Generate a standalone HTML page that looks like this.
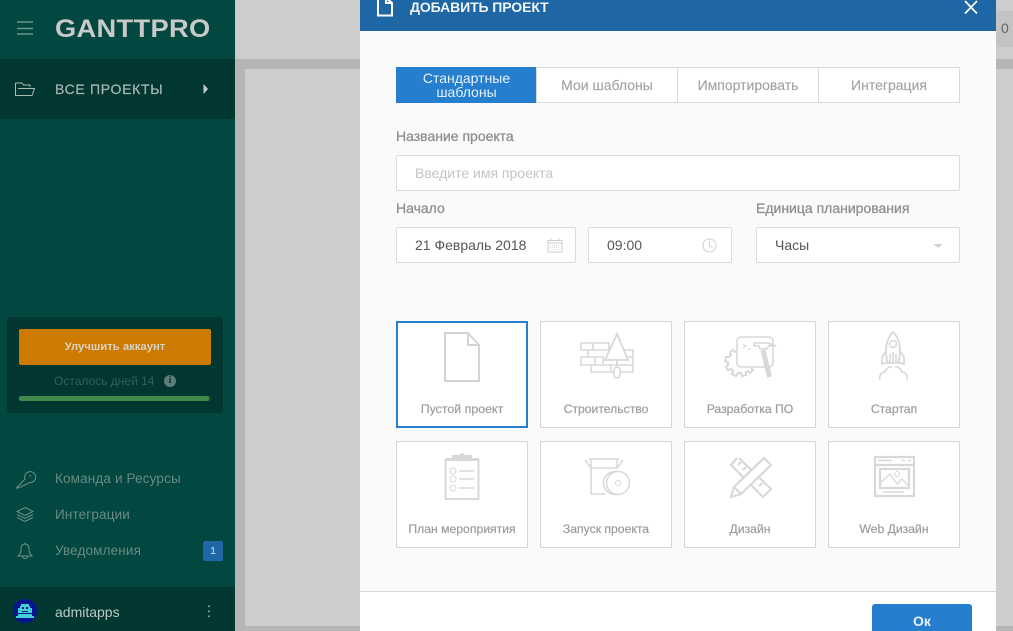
<!DOCTYPE html>
<html><head><meta charset="utf-8">
<style>
html,body{margin:0;padding:0;width:1013px;height:631px;overflow:hidden}
body{background:#cdcdcd;font-family:"Liberation Sans",sans-serif}
#root{position:absolute;left:0;top:0;width:1013px;height:631px;overflow:hidden;background:#cdcdcd}
#root div,#root span{position:absolute;box-sizing:border-box;white-space:nowrap}
svg{position:absolute;overflow:visible}
.t{line-height:16px}
.tab{top:67px;height:36px;background:#fff;border:2px solid #d9d9d9;border-width:1px;color:#a3a3a3;font-size:14px;text-align:center;line-height:34px;-webkit-text-stroke:.15px #a3a3a3}
.lab{color:#8f8f8f;font-size:14px;line-height:16px;-webkit-text-stroke:.3px #8f8f8f}
.inp{background:#fff;border:1px solid #dcdcdc;border-radius:2px;height:36px;font-size:14px;line-height:35px;color:#555}
.card{width:132px;height:107px;background:#fff;border:1px solid #d6d6d6}
.card span{left:0;right:0;top:80px;text-align:center;font-size:12.2px;line-height:14px;color:#9c9c9c;-webkit-text-stroke:.2px #9c9c9c}
.card svg{left:0;top:0;fill:none;stroke:#d8d8d8;stroke-width:2}
.nav{left:55px;font-size:13.5px;line-height:16px;color:#6a8a84;letter-spacing:.15px}
.nsvg{fill:none;stroke:#6f8f89;stroke-width:1}
</style></head><body><div id="root">

<!-- backdrop -->
<div style="left:235px;top:0;width:778px;height:59px;background:#cdcdcd"></div>
<div style="left:235px;top:59px;width:778px;height:10px;background:#b5b5b5"></div>
<div style="left:235px;top:59px;width:10px;height:572px;background:#b5b5b5"></div>
<div style="left:235px;top:626px;width:778px;height:5px;background:#b5b5b5"></div>
<div style="left:996px;top:11px;width:17px;height:36px;background:#c3c3c3"></div>
<div class="t" style="left:1001px;top:20px;font-size:14px;color:#666">0</div>

<!-- sidebar -->
<div style="left:0;top:0;width:235px;height:631px;background:#024740"></div>
<div style="left:0;top:59px;width:235px;height:60px;background:#023731"></div>
<div style="left:0;top:587px;width:235px;height:44px;background:#023731"></div>

<svg style="left:0;top:0" width="40" height="40"><path d="M17 22h16M17 28.500h16M17 34h16" stroke="#6f928c" stroke-width="1.600" fill="none"/></svg>
<div class="t" style="left:55px;top:14px;font-size:25px;line-height:30px;font-weight:700;color:#c9c9c9;letter-spacing:.3px;transform-origin:0 50%;transform:scaleX(1.09)">GANTTPRO</div>

<svg style="left:0;top:0" width="40" height="100"><path d="M15.500 83V95.500H32M15.500 83H22l1.500 2H30V87M18 88.500H34.500L32 95.500H16" fill="none" stroke="#a9bbb7" stroke-width="1"/></svg>
<div class="t" style="left:55px;top:81px;font-size:14px;color:#a2b5b1;letter-spacing:.7px;-webkit-text-stroke:.25px #a2b5b1">ВСЕ ПРОЕКТЫ</div>
<svg style="left:0;top:0" width="215" height="100"><path d="M203.500 84L208 89l-4.500 5z" fill="#c4d0ce"/></svg>

<div style="left:7px;top:317px;width:216px;height:96px;background:#023731;border-radius:3px"></div>
<div style="left:19px;top:329px;width:192px;height:36px;background:#cc7a00;border-radius:2px;color:#d9d2c4;font-size:11.300px;font-weight:700;text-align:center;line-height:36px">Улучшить аккаунт</div>
<div class="t" style="left:54px;top:373px;font-size:12px;color:#2f5f59">Осталось дней 14</div>
<div style="left:164px;top:375px;width:12px;height:12px;border-radius:50%;background:#5c7d78;color:#023731;font-size:10px;font-weight:700;line-height:12px;text-align:center;font-family:'Liberation Serif',serif">i</div>
<div style="left:19px;top:396px;width:192px;height:5px;background:#0f4a44;border-radius:2px"></div>
<div style="left:19px;top:396px;width:190px;height:5px;background:#3f8a4c;border-radius:2px"></div>

<svg class="nsvg" style="left:0;top:0" width="40" height="600">
<path d="M17 487.500l8-8.500a5.500 5.500 0 1 1 4 3.500l-1.500 1.500h-2l-1 1.500h-2l-1 1.500h-2l-1 1h-2.500z"/>
<path d="M29.500 475l1.500 1.500"/>
<path d="M25 507.500l8 4-8 4-8-4zM17 514.500l8 4 8-4M17 517.500l8 4 8-4"/>
<path d="M18 556c2-2 3-3 3-7s2-5 4-5 4 1 4 5 1 5 3 7zM22.500 556c0 3.500 5 3.500 5 0M25 544v-1.500"/>
</svg>
<div class="nav" style="top:471px">Команда и Ресурсы</div>
<div class="nav" style="top:507px">Интеграции</div>
<div class="nav" style="top:543px">Уведомления</div>
<div style="left:203px;top:541px;width:20px;height:20px;background:#1f67a5;border-radius:2px;color:#cfe0ee;font-size:10.500px;line-height:20px;text-align:center">1</div>

<svg style="left:0;top:0" width="40" height="631">
<circle cx="25" cy="611" r="12" fill="#07148f"/>
<path d="M21 604h8v2h1v7h-10v-7h1zM18 608h2v5h-2zM30 608h2v5h-2zM18 614h14v2h2v2H16v-2h2z" fill="#3fd0d8"/>
<path d="M22 607h2v2h-2zM26 607h2v2h-2zM22 611h6v1h-6z" fill="#07148f"/>
</svg>
<div class="t" style="left:55px;top:604px;font-size:14px;color:#bcc9c6">admitapps</div>
<svg style="left:0;top:0" width="215" height="631"><path d="M209 605.500v1.600M209 610.500v1.600M209 615.500v1.600" stroke="#7d9993" stroke-width="2" fill="none"/></svg>

<!-- modal -->
<div style="left:360px;top:0;width:636px;height:631px;background:#fafafa"></div>
<div style="left:360px;top:0;width:636px;height:31px;background:#1f66a5"></div>
<svg style="left:0;top:0" width="400" height="30"><path d="M378 -2V15.500H392V3L386 -2M386 -2V3H392" fill="none" stroke="#fff" stroke-width="2"/></svg>
<div class="t" style="left:410px;top:-1px;font-size:14px;font-weight:700;color:#eef4f9;letter-spacing:-.1px">ДОБАВИТЬ ПРОЕКТ</div>
<svg style="left:0;top:0" width="990" height="30"><path d="M965 1L977 13.500M977 1L965 13.500" stroke="#fff" stroke-width="1.700" fill="none"/></svg>

<div class="tab" style="left:396px;width:141px;background:#257fce;border-color:#257fce;color:#e8f1f9;-webkit-text-stroke:0;line-height:14px;padding-top:2.500px">Стандартные<br>шаблоны</div>
<div class="tab" style="left:536px;width:142px">Мои шаблоны</div>
<div class="tab" style="left:677px;width:142px">Импортировать</div>
<div class="tab" style="left:818px;width:142px">Интеграция</div>

<div class="lab" style="left:396px;top:128px">Название проекта</div>
<div class="inp" style="left:396px;top:155px;width:564px;padding-left:18px;color:#c4c4c4">Введите имя проекта</div>
<div class="lab" style="left:396px;top:200px">Начало</div>
<div class="lab" style="left:756px;top:200px">Единица планирования</div>
<div class="inp" style="left:396px;top:227px;width:180px;padding-left:18px">21 Февраль 2018</div>
<div class="inp" style="left:588px;top:227px;width:144px;padding-left:18px">09:00</div>
<div class="inp" style="left:756px;top:227px;width:204px;padding-left:18px">Часы</div>
<svg style="left:0;top:0" width="960" height="270" fill="none" stroke="#cfcfcf">
<path d="M548 240.500h14v11.500h-14zM551 238v3M559 238v3M548 243h14" stroke="#cfcfcf"/>
<path d="M550 245.500h10M550 247.500h10M550 249.500h10" stroke="#dcdcdc" stroke-dasharray="1 1"/>
<circle cx="709.500" cy="245.500" r="6.500"/>
<path d="M709.500 241.500v4.500l3 1.500"/>
<path d="M933.500 244h9l-4.500 4z" fill="#d0d0d0" stroke="none"/>
</svg>

<!-- cards -->
<div class="card" style="left:396px;top:321px;border:2px solid #257fce"><span style="top:79px;left:-1px;right:-1px;font-size:12.400px">Пустой проект</span></div>
<svg style="left:0;top:0" width="500" height="400" fill="none" stroke="#d4d4d4" stroke-width="2"><path d="M445 333H468L479 345V381H445zM468 333V345H479"/></svg>

<div class="card" style="left:540px;top:321px"><span>Строительство</span>
<svg width="132" height="107"><path stroke-width="1.600" d="M40 21H68V28H40zM52 21v7M47 28V35H63M47 28H68M40 35H62V43H40zM54 35v8M50 43V50H92V43H50zM70 43v7M82 28H92V35H84M84 35H92V43H82"/><path d="M76 12L64 38H87zM76 38v7" stroke-width="1.800" fill="#fff"/><rect x="73" y="45" width="6" height="11" rx="3" stroke-width="1.600" fill="#fff"/></svg></div>

<div class="card" style="left:684px;top:321px"><span>Разработка ПО</span>
<svg width="132" height="107"><path stroke-width="2" d="M53 29l-3 1-2-2-3 2 1 3-2 2-3 0-1 4 3 1 0 3-2 2 2 3 3-1 2 2-1 3 4 2 2-3h3l1 3 4-1v-3l2-1 2 2 3-3-2-2"/><rect x="52" y="15" width="36" height="30" rx="4" stroke-width="1.600" fill="#fff"/><path stroke-width="1.200" d="M58 22l3 2-3 2M63 27h3"/><path fill="#fff" stroke-width="1.500" d="M69 21h14l8 3-7-.5-2 3.500h-7l-1-3h-5z"/><path d="M78 28l6.500 27" stroke-width="5"/></svg></div>

<div class="card" style="left:828px;top:321px"><span>Стартап</span>
<svg width="132" height="107"><path stroke-width="1.800" d="M64 10c-5 5-7 11-7 19 0 5 1 9 2 12h10c1-3 2-7 2-12 0-8-2-14-7-19zM57 29l-4 6v7l6-2M71 29l4 6v7l-6-2"/><circle cx="64" cy="22" r="3.500" stroke-width="1.500"/><path stroke-width="1.600" d="M64 30v11M61 32v8M67 32v8M51 58c-1-4 1-8 5-8 1-3 4-6 7-5M78 58c1-4-1-8-5-8-1-3-4-6-7-5"/></svg></div>

<div class="card" style="left:396px;top:441px"><span>План мероприятия</span>
<svg width="132" height="107"><path d="M48.500 18H81.500V57H48.500z" stroke-width="2"/><path d="M48 16H82V18H48z" fill="#d8d8d8" stroke="none"/><path d="M55 13h7q3-4 6 0h7v4H55z" fill="#d8d8d8" stroke="none"/><path stroke-width="1.500" d="M62 29h15M62 37h15M62 46h15"/><circle cx="56" cy="29" r="3" stroke-width="1"/><circle cx="56" cy="37" r="3" stroke-width="1"/><circle cx="56" cy="46" r="3" stroke-width="1"/></svg></div>

<div class="card" style="left:540px;top:441px"><span>Запуск проекта</span>
<svg width="132" height="107"><path stroke-width="1.600" d="M48 17H78M50 26V52H64M50 26H76M50 26L44 18M76 26V17M76 26L82 18M50 26V17"/><circle cx="74" cy="41" r="11.500" stroke-width="1.500" fill="#fff"/><circle cx="77" cy="41" r="11.500" stroke-width="1.500" fill="#fff"/><circle cx="77" cy="41" r="2.500" stroke-width="1"/></svg></div>

<div class="card" style="left:684px;top:441px"><span>Дизайн</span>
<svg width="132" height="107"><path stroke-width="2.200" d="M52 16L46 23 78 55 86 47 54 16M56 20l-3 3M61 25l-3 3M72 36l-3 3M77 41l-3 3"/><path stroke-width="2.200" fill="#fff" d="M79 16L86 23 56 52 46 55 49 45zM49 45l7 7"/></svg></div>

<div class="card" style="left:828px;top:441px"><span>Web Дизайн</span>
<svg width="132" height="107"><path stroke-width="2.200" d="M46 15H85V54H46zM46 23H85M51 27H80V46H51z"/><path stroke-width="1.300" d="M51 41l10-9 7 10 5-5 7 7"/><circle cx="68" cy="32" r="2.500" stroke-width="1"/><path stroke-width="1.500" d="M49 18.500h14M73 18.500h3M79 18.500h3M54 50h21"/></svg></div>

<!-- footer -->
<div style="left:360px;top:591px;width:636px;height:40px;background:#fff;border-top:1px solid #d9d9d9"></div>
<div style="left:872px;top:604px;width:100px;height:27px;background:#257fce;border-radius:3px 3px 0 0;color:#e8f1f9;font-size:14px;font-weight:700;text-align:center;line-height:34px;overflow:hidden">Ок</div>

</div></body></html>
